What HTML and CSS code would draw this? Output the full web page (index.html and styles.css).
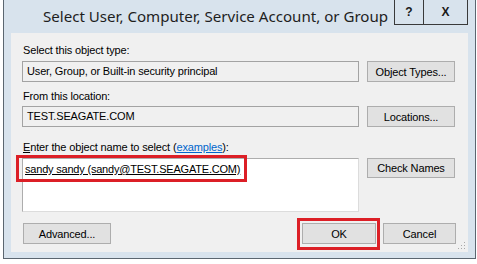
FILE: index.html
```html
<!DOCTYPE html>
<html>
<head>
<meta charset="utf-8">
<link rel="stylesheet" href="styles.css">
</head>
<body>
<div class="window">
  <div class="titlebar">
    <div class="title">Select User, Computer, Service Account, or Group</div>
    <div class="caption-buttons">
      <div class="cap-btn help">?</div>
      <div class="cap-btn close">X</div>
    </div>
  </div>
  <div class="client">
    <div class="label">Select this object type:</div>
    <div class="row">
      <div class="field">User, Group, or Built-in security principal</div>
      <div class="btn side">Object Types...</div>
    </div>
    <div class="label l2">From this location:</div>
    <div class="row r2">
      <div class="field">TEST.SEAGATE.COM</div>
      <div class="btn side">Locations...</div>
    </div>
    <div class="label l3"><u>E</u>nter the object name to select (<a class="link">examples</a>):</div>
    <div class="row r3">
      <div class="textarea">
        <span class="name">sandy sandy (sandy@TEST.SEAGATE.COM)</span>
        <span class="mark mark-name"></span>
      </div>
      <div class="btn side">Check Names</div>
    </div>
    <div class="bottom">
      <div class="btn adv">Advanced...</div>
      <div class="actions">
        <div class="btn ok">OK<span class="mark mark-ok"></span></div>
        <div class="btn cancel">Cancel</div>
      </div>
    </div>
    <svg class="grip" width="8" height="8" viewBox="0 0 8 8">
      <rect x="6" y="0" width="1" height="1" fill="#a8a8a8"/>
      <rect x="3" y="3" width="1" height="1" fill="#a8a8a8"/>
      <rect x="6" y="3" width="1" height="1" fill="#a8a8a8"/>
      <rect x="0" y="6" width="1" height="1" fill="#a8a8a8"/>
      <rect x="3" y="6" width="1" height="1" fill="#a8a8a8"/>
      <rect x="6" y="6" width="1" height="1" fill="#a8a8a8"/>
    </svg>
  </div>
</div>
</body>
</html>
```

FILE: styles.css
```css
html, body {
  margin: 0;
  padding: 0;
  background: #ffffff;
}
body {
  width: 477px;
  height: 264px;
  overflow: hidden;
  font-family: "Liberation Sans", Arial, sans-serif;
}
.window {
  margin-left: 3px;
  width: 473px;
  height: 259px;
  box-sizing: border-box;
  background: #d8e3ed;
  border: 1px solid #5b6670;
  border-top: none;
  display: flex;
  flex-direction: column;
}
.titlebar {
  height: 33px;
  display: flex;
  align-items: flex-start;
  flex-shrink: 0;
}
.title {
  flex: 1;
  padding-left: 39px;
  padding-top: 5px;
  font-family: "Noto Sans", "Open Sans", sans-serif;
  font-size: 15.1px;
  line-height: 22px;
  color: #1e1e1e;
  white-space: nowrap;
}
.caption-buttons {
  display: flex;
  margin-right: 7px;
}
.cap-btn {
  height: 25px;
  box-sizing: border-box;
  border: 1px solid #3a3a3a;
  border-top: none;
  display: flex;
  align-items: center;
  justify-content: center;
  font-weight: bold;
  font-size: 12px;
  color: #1a1a1a;
}
.help {
  width: 29px;
  border-right: none;
}
.close {
  width: 45px;
}
.client {
  position: relative;
  flex: 1;
  margin: 0 7px 6px 7px;
  background: #f0f0f0;
  padding: 10px 12px 0 11px;
  font-size: 11px;
  letter-spacing: -0.15px;
  color: #000;
}
.label {
  height: 14px;
  line-height: 14px;
  padding-left: 1px;
  white-space: nowrap;
}
.l2 { margin-top: 7px; }
.l3 { margin-top: 13px; }
.label u { text-decoration: underline; }
.link {
  color: #0066cc;
  text-decoration: underline;
}
.row {
  display: flex;
  gap: 8px;
  margin-top: 4px;
  align-items: flex-start;
}
.r2 { margin-top: 3px; }
.r3 { margin-top: 4px; }
.field {
  width: 337px;
  height: 21px;
  box-sizing: border-box;
  border: 1px solid #a3a3a3;
  background: #f0f0f0;
  line-height: 19px;
  padding-left: 4px;
  white-space: nowrap;
}
.btn {
  box-sizing: border-box;
  height: 21px;
  border: 1px solid #adadad;
  background: #e1e1e1;
  display: flex;
  align-items: center;
  justify-content: center;
  white-space: nowrap;
}
.side {
  width: 88px;
}
.r3 .side { height: 20px; }
.textarea {
  position: relative;
  width: 337px;
  height: 54px;
  box-sizing: border-box;
  border: 1px solid #adadad;
  border-right-color: #dcdcdc;
  border-bottom-color: #dcdcdc;
  background: #ffffff;
  padding: 3px 0 0 2px;
  line-height: 14px;
  white-space: nowrap;
}
.name {
  font-size: 11px;
  letter-spacing: -0.2px;
  text-decoration: underline;
}
.mark {
  position: absolute;
  box-sizing: border-box;
  border: 3px solid #dc1f26;
  pointer-events: none;
}
.mark-name {
  left: -7px;
  top: -4px;
  width: 231px;
  height: 27px;
}
.bottom {
  display: flex;
  justify-content: space-between;
  margin-top: 11px;
}
.adv {
  width: 88px;
  margin-left: 1px;
}
.actions {
  display: flex;
  gap: 7px;
}
.ok {
  position: relative;
  width: 74px;
}
.cancel {
  width: 73px;
}
.mark-ok {
  left: -6px;
  top: -6px;
  right: -5px;
  bottom: -7px;
}
.grip {
  position: absolute;
  right: 2px;
  bottom: 2px;
}
```
